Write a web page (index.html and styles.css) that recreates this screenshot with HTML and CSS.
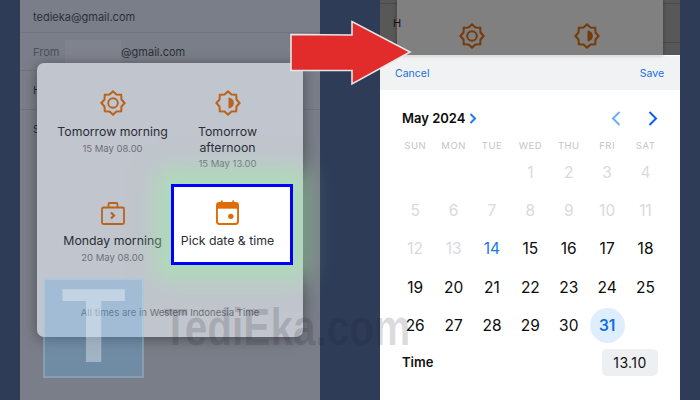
FILE: index.html
```html
<!DOCTYPE html>
<html lang="en">
<head>
    <meta charset="UTF-8">
    <meta name="viewport" content="width=device-width, initial-scale=1.0">
    <title>Schedule send</title>
    <link rel="stylesheet" href="styles.css">
</head>
<body>
    <svg class="defs" width="0" height="0">
        <symbol id="star" viewBox="0 0 26 26">
            <polygon fill="none" stroke="currentColor" stroke-width="2" stroke-linejoin="miter" points="24.6,13 21.5,16.52 21.2,21.2 16.52,21.5 13,24.6 9.48,21.5 4.8,21.2 4.5,16.52 1.4,13 4.5,9.48 4.8,4.8 9.48,4.5 13,1.4 16.52,4.5 21.2,4.8 21.5,9.48"/>
        </symbol>
    </svg>

    <div class="stage">
        <!-- left phone -->
        <div class="phone phone-left">
            <div class="mail-row row-to">tedieka@gmail.com</div>
            <div class="mail-row row-from"><span class="from-label">From</span><span class="blur-box"></span><span>@gmail.com</span></div>
            <div class="mail-row row-h">H</div>
            <div class="mail-row row-s">S</div>

            <div class="modal">
                <div class="options">
                    <div class="option">
                        <svg class="icon" width="26" height="26" viewBox="0 0 26 26">
                            <use href="#star"/>
                            <circle cx="13" cy="13" r="4.8" fill="none" stroke="currentColor" stroke-width="1.9"/>
                        </svg>
                        <div class="option-title">Tomorrow morning</div>
                        <div class="option-sub">15 May 08.00</div>
                    </div>
                    <div class="option">
                        <svg class="icon" width="26" height="26" viewBox="0 0 26 26">
                            <use href="#star"/>
                            <path d="M13.5 7.6A5.4 5.4 0 0 1 13.5 18.4Z" fill="currentColor"/>
                        </svg>
                        <div class="option-title">Tomorrow afternoon</div>
                        <div class="option-sub">15 May 13.00</div>
                    </div>
                    <div class="option option-low">
                        <svg class="icon" width="26" height="26" viewBox="0 0 26 26" fill="none" stroke="currentColor" stroke-width="1.8">
                            <rect x="2" y="6.5" width="22" height="16.5" rx="1.5"/>
                            <path d="M8.5 6.5V3.2A1.2 1.2 0 0 1 9.7 2H16.3A1.2 1.2 0 0 1 17.5 3.2V6.5"/>
                            <path d="M11 11.5L14 14.5L11 17.5" stroke-width="2.2"/>
                        </svg>
                        <div class="option-title">Monday morning</div>
                        <div class="option-sub">20 May 08.00</div>
                    </div>
                    <div class="option option-pick">
                        <svg class="icon-cal" width="24" height="26" viewBox="0 0 24 26">
                            <path d="M6 0.5V4M18 0.5V4" stroke="currentColor" stroke-width="2"/>
                            <rect x="1" y="3" width="22" height="22" rx="2.5" fill="none" stroke="currentColor" stroke-width="2"/>
                            <rect x="1" y="3" width="22" height="6" fill="currentColor"/>
                            <circle cx="15.5" cy="17" r="2.8" fill="currentColor"/>
                        </svg>
                        <div class="option-title">Pick date &amp; time</div>
                    </div>
                </div>
                <div class="modal-note">All times are in Western Indonesia Time</div>
            </div>
        </div>

        <!-- right phone -->
        <div class="phone phone-right">
            <div class="dim-top">
                <span class="dim-letter">H</span>
                <div class="dim-card">
                    <svg class="icon-dim" width="26" height="26" viewBox="0 0 26 26">
                        <use href="#star"/>
                        <circle cx="13" cy="13" r="4.8" fill="none" stroke="currentColor" stroke-width="1.9"/>
                    </svg>
                    <svg class="icon-dim" width="26" height="26" viewBox="0 0 26 26">
                        <use href="#star"/>
                        <path d="M13.5 7.6A5.4 5.4 0 0 1 13.5 18.4Z" fill="currentColor"/>
                    </svg>
                </div>
            </div>
            <div class="picker">
                <div class="picker-head">
                    <span>Cancel</span>
                    <span>Save</span>
                </div>
                <div class="month-row">
                    <span class="month-name">May 2024</span>
                    <svg class="chev" width="8" height="11" viewBox="0 0 8 11"><path d="M1.5 1L6 5.5L1.5 10"/></svg>
                    <svg class="chev-prev" width="10" height="15" viewBox="0 0 10 15"><path d="M8.5 1L2 7.5L8.5 14"/></svg>
                    <svg class="chev-next" width="10" height="15" viewBox="0 0 10 15"><path d="M1.5 1L8 7.5L1.5 14"/></svg>
                </div>
                <div class="week-head">
                    <span>SUN</span><span>MON</span><span>TUE</span><span>WED</span><span>THU</span><span>FRI</span><span>SAT</span>
                </div>
                <div class="days">
                    <span></span><span></span><span></span>
                    <span class="off">1</span><span class="off">2</span><span class="off">3</span><span class="off">4</span>
                    <span class="off">5</span><span class="off">6</span><span class="off">7</span><span class="off">8</span><span class="off">9</span><span class="off">10</span><span class="off">11</span>
                    <span class="off">12</span><span class="off">13</span><span class="today">14</span><span>15</span><span>16</span><span>17</span><span>18</span>
                    <span>19</span><span>20</span><span>21</span><span>22</span><span>23</span><span>24</span><span>25</span>
                    <span>26</span><span>27</span><span>28</span><span>29</span><span>30</span><span class="picked"><b>31</b></span>
                </div>
                <div class="time-row">
                    <span class="time-label">Time</span>
                    <span class="time-chip">13.10</span>
                </div>
            </div>
        </div>
    </div>

    <!-- annotation arrow -->
    <svg class="arrow" width="130" height="72" viewBox="0 0 130 72">
        <polygon points="1,14.5 62,15 62,1.5 120,32 62,64 62,50.5 1,50.5" fill="#e22b2b" stroke="#e6e6e6" stroke-width="1.6"/>
    </svg>

    <!-- site watermark -->
    <div class="watermark">
        <div class="wm-logo">T</div>
        <div class="wm-text">TediEka.com</div>
    </div>
</body>
</html>
```

FILE: styles.css
```css
* {
    box-sizing: border-box;
}
html, body {
    margin: 0;
    height: 100%;
}
body {
    position: relative;
    width: 700px;
    height: 400px;
    overflow: hidden;
    background-color: #2e3c58;
    font-family: Inter, "Liberation Sans", sans-serif;
}
.defs {
    position: absolute;
}
.stage {
    display: flex;
    gap: 60px;
    height: 400px;
    padding: 0 20px;
}
.phone {
    position: relative;
    width: 300px;
    height: 400px;
    overflow: hidden;
}

/* left phone */
.phone-left {
    overflow: visible;
    background-color: #7a7e88;
    color: #2c2f38;
    font-size: 11px;
}
.mail-row {
    display: flex;
    align-items: center;
    padding-left: 13px;
    border-bottom: 1px solid #70747e;
}
.row-to {
    height: 33px;
    padding-top: 1px;
}
.row-from {
    height: 38px;
    padding-top: 1px;
}
.row-h {
    height: 39px;
}
.row-s {
    height: 38px;
    border-bottom: none;
}
.from-label {
    width: 32px;
    color: #4c505a;
}
.blur-box {
    width: 56px;
    height: 25px;
    background-color: #80838d;
}
.modal {
    position: absolute;
    left: 17px;
    top: 63px;
    width: 266px;
    height: 274px;
    padding: 27px 18px 0;
    border-radius: 7px;
    background-color: #c1c5cd;
    box-shadow: 0 2px 14px rgba(0, 0, 0, 0.38);
}
.options {
    display: grid;
    grid-template-columns: 115px 115px;
    grid-template-rows: 94px 81px;
}
.option {
    display: flex;
    flex-direction: column;
    align-items: center;
    text-align: center;
    color: #b9631d;
}
.option-low {
    padding-top: 17px;
}
.option-pick {
    justify-self: stretch;
    margin-right: -8px;
    margin-left: 1px;
    padding: 13px 9px 0 0;
    border: 3px solid #0000ff;
    background-color: #fff;
    color: #df6c07;
    box-shadow: 0 0 22px 14px rgba(155, 240, 165, 0.55);
}
.icon-cal {
    display: block;
    width: 23px;
    height: 25px;
}
.option-title {
    margin-top: 8px;
    color: #2b2e37;
    font-size: 12.3px;
    line-height: 15.5px;
}
.option-low .option-title {
    margin-top: 6px;
}
.option-pick .option-title {
    margin-top: 8px;
    white-space: nowrap;
}
.option-sub {
    margin-top: 2px;
    color: #6b7079;
    font-size: 9.5px;
    line-height: 13px;
}
.modal-note {
    margin-top: 42px;
    color: #6a6e78;
    font-size: 9.6px;
    line-height: 12px;
    text-align: center;
}

/* right phone */
.phone-right {
    display: flex;
    flex-direction: column;
    background-color: #fff;
}
.dim-top {
    position: relative;
    display: flex;
    justify-content: center;
    height: 55px;
    padding-right: 2px;
    background-color: #585858;
    background-image: linear-gradient(#4a4a4a, #4a4a4a), linear-gradient(#4a4a4a, #4a4a4a);
    background-size: 100% 1px;
    background-position: 0 3px, 0 42px;
    background-repeat: no-repeat;
    color: #111;
    font-size: 11px;
}
.dim-letter {
    position: absolute;
    left: 13px;
    top: 16px;
}
.dim-card {
    display: flex;
    justify-content: center;
    gap: 89px;
    width: 266px;
    margin-right: -2px;
    padding: 23px 2px 0 0;
    background-color: #808080;
    box-shadow: 0 0 4px rgba(0, 0, 0, 0.3);
}
.icon-dim {
    flex: none;
    color: #763a08;
}
.picker {
    flex: 1;
    border-top: 1px solid #fff;
}
.picker-head {
    display: flex;
    justify-content: space-between;
    align-items: center;
    height: 34px;
    padding: 0 16px 0 15px;
    background-color: #f1f2f4;
    color: #1b6fe0;
    font-size: 10.5px;
}
.month-row {
    display: flex;
    align-items: center;
    height: 28px;
    margin-top: 14px;
    padding-left: 22px;
}
.month-name {
    color: #0b0b0b;
    font-size: 13px;
    font-weight: 600;
}
.month-row svg {
    fill: none;
    stroke-width: 2;
}
.chev {
    margin-left: 4px;
    stroke: #1b7cf0;
}
.chev-prev {
    margin-left: 134px;
    stroke: #6aaef5;
}
.chev-next {
    margin-left: 27px;
    stroke: #0a5fe8;
}
.week-head, .days {
    display: grid;
    grid-template-columns: repeat(7, 38.4px);
    padding-left: 16px;
    text-align: center;
}
.week-head {
    margin-top: 8px;
    color: #c4c5c8;
    font-size: 9.5px;
    line-height: 12px;
    letter-spacing: 0.5px;
}
.days {
    margin-top: 1px;
    grid-auto-rows: 38.4px;
    color: #0c0c0c;
    font-size: 15.5px;
}
.days span {
    display: flex;
    justify-content: center;
    align-items: center;
}
.days .off {
    color: #d9dadc;
}
.days .today {
    color: #1877e6;
}
.days .picked b {
    display: flex;
    justify-content: center;
    align-items: center;
    width: 35px;
    height: 35px;
    border-radius: 50%;
    background-color: #dfeefe;
    color: #0f6fe6;
    font-weight: 600;
}
.time-row {
    display: flex;
    justify-content: space-between;
    align-items: center;
    padding: 4px 22px 0;
    font-size: 13px;
}
.time-label {
    color: #111;
    font-weight: 600;
}
.time-chip {
    width: 56px;
    height: 27px;
    border-radius: 5px;
    background-color: #eeeff1;
    color: #111;
    font-size: 14px;
    letter-spacing: 0.4px;
    line-height: 27px;
    text-align: center;
}

/* overlays */
.arrow {
    position: absolute;
    left: 289.5px;
    top: 20px;
}
.watermark {
    position: absolute;
    left: 43px;
    top: 278px;
    display: flex;
    align-items: flex-start;
    gap: 19px;
}
.wm-logo {
    width: 101px;
    height: 100px;
    border: 2px solid rgba(255, 255, 255, 0.16);
    background-color: rgba(90, 170, 230, 0.3);
    color: rgba(255, 255, 255, 0.35);
    font-family: "Liberation Sans", sans-serif;
    font-size: 106px;
    font-weight: 700;
    line-height: 90px;
    text-align: center;
}
.wm-text {
    margin-top: 25px;
    color: rgba(30, 30, 40, 0.16);
    font-family: "Liberation Sans", sans-serif;
    font-size: 52px;
    font-weight: 700;
    line-height: 48px;
    white-space: nowrap;
    transform: scaleX(0.78);
    transform-origin: left center;
}
```
